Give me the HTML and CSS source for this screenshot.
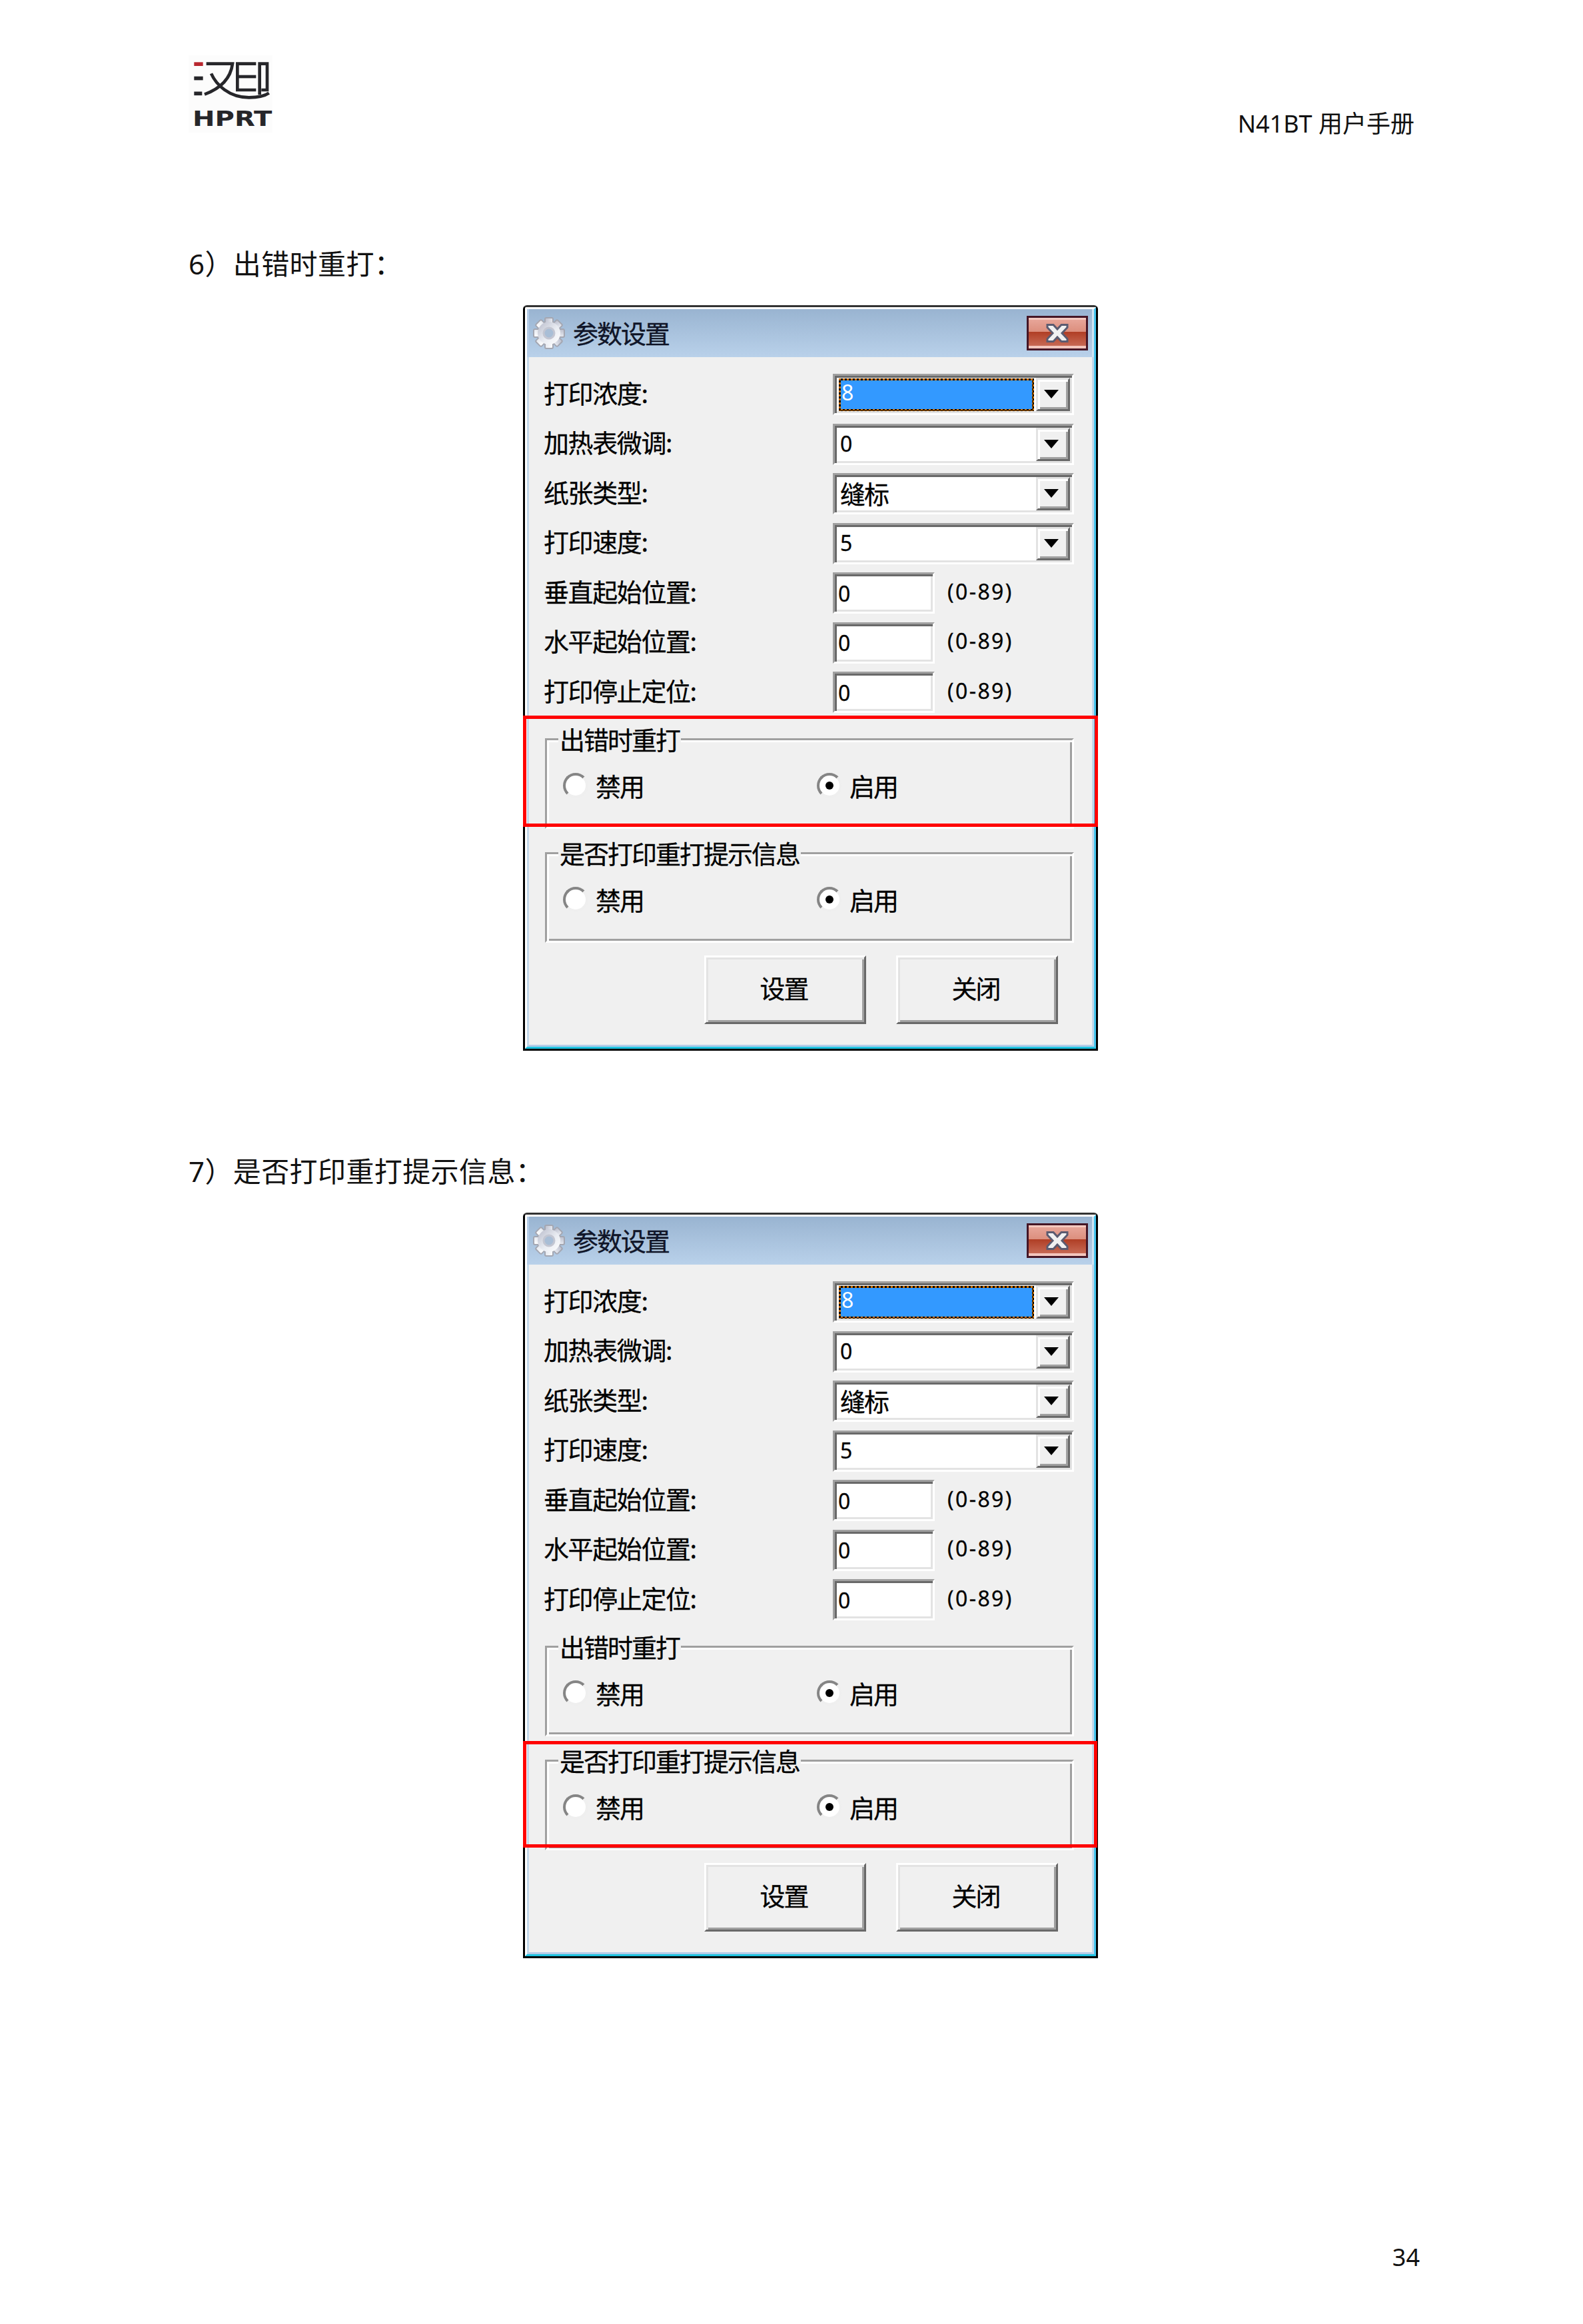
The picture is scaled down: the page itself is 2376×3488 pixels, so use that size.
FILE: index.html
```html
<!DOCTYPE html>
<html lang="zh-CN">
<head>
    <meta charset="UTF-8">
    <title>N41BT 用户手册</title>
    <link rel="stylesheet" href="styles.css">
</head>
<body>
    <svg class="sprite" width="0" height="0">
        <defs>
            <linearGradient id="gearFill" x1="0" y1="0" x2="1" y2="1">
                <stop offset="0" stop-color="#b9bccb"/>
                <stop offset="0.55" stop-color="#e9ecf2"/>
                <stop offset="1" stop-color="#ffffff"/>
            </linearGradient>
        </defs>
        <symbol id="gear" viewBox="0 0 48 48">
            <g fill="url(#gearFill)" stroke="#a4a7b2" stroke-width="2">
                <rect x="18" y="1" width="12" height="46" rx="2"/>
                <rect x="18" y="1" width="12" height="46" rx="2" transform="rotate(45 24 24)"/>
                <rect x="18" y="1" width="12" height="46" rx="2" transform="rotate(90 24 24)"/>
                <rect x="18" y="1" width="12" height="46" rx="2" transform="rotate(135 24 24)"/>
            </g>
            <circle cx="24" cy="24" r="17" fill="url(#gearFill)"/>
            <circle cx="24" cy="24" r="8" fill="#a9bed6" stroke="#c3c6d2" stroke-width="3"/>
        </symbol>
        <symbol id="closeX" viewBox="0 0 34 28">
            <path d="M2 1.5h9l6 6.500 6-6.500h9v4l-8 8.500 8 8.500v4h-9l-6-6.500-6 6.500h-9v-4l8-8.500-8-8.500z" fill="#f1f1f1" stroke="#5b5b70" stroke-width="3"/>
        </symbol>
    </svg>

    <div class="page">
        <header class="page-head">
            <svg class="logo" viewBox="70 40 378 348">
                <rect x="70" y="40" width="378" height="348" fill="#fcfcfc"/>
                <rect x="95" y="71" width="40" height="17" fill="#b8262e"/>
                <rect x="95" y="135" width="40" height="17" fill="#26262a"/>
                <path d="M95 212h36" fill="none" stroke="#26262a" stroke-width="17"/>
                <g fill="none" stroke="#26262a" stroke-width="14">
                    <path d="M150 78h118c-8 62-50 110-126 138"/>
                    <path d="M172 122c22 50 80 108 170 108 38 0 70-6 90-20"/>
                    <path d="M374 78h-84v118h84"/>
                    <path d="M290 136h84"/>
                    <path d="M390 218V78h34v118h-26"/>
                </g>
                <text class="logo-word" x="88" y="358" textLength="358" lengthAdjust="spacingAndGlyphs">HPRT</text>
            </svg>
            <div class="doc-title">N41BT 用户手册</div>
        </header>

        <h2 class="step first">6）出错时重打：</h2>

        <div class="dialog">
            <div class="edge">
                <div class="titlebar">
                    <svg class="gear"><use href="#gear"/></svg>
                    <span class="caption">参数设置</span>
                    <div class="close"><svg class="close-x"><use href="#closeX"/></svg></div>
                </div>
                <div class="client">
                    <div class="rows">
                        <div class="row">
                            <span class="label">打印浓度:</span>
                            <div class="field combo">
                                <div class="value"><span class="selected"><span class="selected-fill">8</span></span></div>
                                <div class="drop"></div>
                            </div>
                        </div>
                        <div class="row">
                            <span class="label">加热表微调:</span>
                            <div class="field combo">
                                <div class="value"><span class="digit">0</span></div>
                                <div class="drop"></div>
                            </div>
                        </div>
                        <div class="row">
                            <span class="label">纸张类型:</span>
                            <div class="field combo">
                                <div class="value">缝标</div>
                                <div class="drop"></div>
                            </div>
                        </div>
                        <div class="row">
                            <span class="label">打印速度:</span>
                            <div class="field combo">
                                <div class="value"><span class="digit">5</span></div>
                                <div class="drop"></div>
                            </div>
                        </div>
                        <div class="row">
                            <span class="label">垂直起始位置:</span>
                            <div class="field input"><span class="digit">0</span></div>
                            <span class="range">(0-89)</span>
                        </div>
                        <div class="row">
                            <span class="label">水平起始位置:</span>
                            <div class="field input"><span class="digit">0</span></div>
                            <span class="range">(0-89)</span>
                        </div>
                        <div class="row">
                            <span class="label">打印停止定位:</span>
                            <div class="field input"><span class="digit">0</span></div>
                            <span class="range">(0-89)</span>
                        </div>
                    </div>

                    <div class="group">
                        <span class="legend">出错时重打</span>
                        <div class="radios">
                            <div class="radio-item"><span class="radio"></span>禁用</div>
                            <div class="radio-item"><span class="radio on"></span>启用</div>
                        </div>
                    </div>

                    <div class="group">
                        <span class="legend">是否打印重打提示信息</span>
                        <div class="radios">
                            <div class="radio-item"><span class="radio"></span>禁用</div>
                            <div class="radio-item"><span class="radio on"></span>启用</div>
                        </div>
                    </div>

                    <div class="buttons">
                        <div class="btn">设置</div>
                        <div class="btn">关闭</div>
                    </div>
                </div>
            </div>
            <div class="mark mark-retry"></div>
        </div>

        <h2 class="step">7）是否打印重打提示信息：</h2>

        <div class="dialog">
            <div class="edge">
                <div class="titlebar">
                    <svg class="gear"><use href="#gear"/></svg>
                    <span class="caption">参数设置</span>
                    <div class="close"><svg class="close-x"><use href="#closeX"/></svg></div>
                </div>
                <div class="client">
                    <div class="rows">
                        <div class="row">
                            <span class="label">打印浓度:</span>
                            <div class="field combo">
                                <div class="value"><span class="selected"><span class="selected-fill">8</span></span></div>
                                <div class="drop"></div>
                            </div>
                        </div>
                        <div class="row">
                            <span class="label">加热表微调:</span>
                            <div class="field combo">
                                <div class="value"><span class="digit">0</span></div>
                                <div class="drop"></div>
                            </div>
                        </div>
                        <div class="row">
                            <span class="label">纸张类型:</span>
                            <div class="field combo">
                                <div class="value">缝标</div>
                                <div class="drop"></div>
                            </div>
                        </div>
                        <div class="row">
                            <span class="label">打印速度:</span>
                            <div class="field combo">
                                <div class="value"><span class="digit">5</span></div>
                                <div class="drop"></div>
                            </div>
                        </div>
                        <div class="row">
                            <span class="label">垂直起始位置:</span>
                            <div class="field input"><span class="digit">0</span></div>
                            <span class="range">(0-89)</span>
                        </div>
                        <div class="row">
                            <span class="label">水平起始位置:</span>
                            <div class="field input"><span class="digit">0</span></div>
                            <span class="range">(0-89)</span>
                        </div>
                        <div class="row">
                            <span class="label">打印停止定位:</span>
                            <div class="field input"><span class="digit">0</span></div>
                            <span class="range">(0-89)</span>
                        </div>
                    </div>

                    <div class="group">
                        <span class="legend">出错时重打</span>
                        <div class="radios">
                            <div class="radio-item"><span class="radio"></span>禁用</div>
                            <div class="radio-item"><span class="radio on"></span>启用</div>
                        </div>
                    </div>

                    <div class="group">
                        <span class="legend">是否打印重打提示信息</span>
                        <div class="radios">
                            <div class="radio-item"><span class="radio"></span>禁用</div>
                            <div class="radio-item"><span class="radio on"></span>启用</div>
                        </div>
                    </div>

                    <div class="buttons">
                        <div class="btn">设置</div>
                        <div class="btn">关闭</div>
                    </div>
                </div>
            </div>
            <div class="mark mark-info"></div>
        </div>

        <footer class="page-foot">34</footer>
    </div>
</body>
</html>
```

FILE: styles.css
```css
html, body {
    margin: 0;
    padding: 0;
    background: #fff;
    color: #111;
    font-family: "Noto Sans", "Noto Sans CJK SC", sans-serif;
}

.sprite {
    position: absolute;
}

.page {
    width: 2376px;
    height: 3488px;
    box-sizing: border-box;
    padding: 83px 0 0 283px;
    overflow: hidden;
}

/* Page header */
.page-head {
    display: flex;
    justify-content: space-between;
    align-items: flex-start;
    padding-right: 253px;
}

.logo {
    display: block;
    width: 126px;
    height: 116px;
}

.logo-word {
    font-family: "DejaVu Sans", sans-serif;
    font-weight: bold;
    font-size: 98px;
    fill: #26262a;
}

.doc-title {
    margin-top: 79px;
    font-size: 36px;
    line-height: 48px;
}

.step {
    margin: 157px 0 0;
    font-size: 42px;
    font-weight: normal;
    letter-spacing: 0.4px;
    line-height: 48px;
}

.step.first {
    margin-top: 162px;
}

.page-foot {
    margin-top: 425px;
    padding-right: 245px;
    text-align: right;
    font-size: 36px;
    line-height: 48px;
}

/* Dialog window */
.dialog {
    position: relative;
    width: 863px;
    height: 1119px;
    box-sizing: border-box;
    margin: 38px 0 0 502px;
    border: 3px solid #000;
    border-top-color: #333;
    border-radius: 6px 6px 0 0;
    font-family: "Noto Sans CJK SC", sans-serif;
    font-size: 36px;
    color: #000;
    -webkit-text-stroke: 0.3px #000;
}

.edge {
    display: flex;
    flex-direction: column;
    height: 100%;
    box-sizing: border-box;
    border-style: solid;
    border-width: 3px;
    border-color: #fff #46c5ee #1fc3e0 #fff;
    border-top-left-radius: 3px;
}

.titlebar {
    display: flex;
    align-items: center;
    flex: none;
    height: 72px;
    padding: 0 6px 0 9px;
    background: linear-gradient(#99b4d1, #b9d1ea);
    border-left: 3px solid #b5cde8;
    border-right: 3px solid #d0e4f2;
}

.gear {
    width: 48px;
    height: 48px;
    margin-left: -3px;
}

.caption {
    margin: -3px 0 0 12px;
    width: 144px;
    font-size: 38px;
    letter-spacing: -2px;
    line-height: 40px;
    color: #10162c;
}

.close {
    display: flex;
    align-items: center;
    justify-content: center;
    width: 92px;
    height: 52px;
    box-sizing: border-box;
    margin-left: auto;
    border: 3px solid #451626;
    background: linear-gradient(#f5c9c0 0 3px, #e7a598 3px, #dc8f7e 45%, #b03e25 46%, #c76a55 92%, #f3c6bd 92%);
}

.close-x {
    width: 34px;
    height: 28px;
}

.client {
    flex: 1;
    display: flex;
    flex-direction: column;
    padding: 25px 27px 0 24px;
    background: #f0f0f0;
    border-style: solid;
    border-width: 0 3px 3px;
    border-color: #b5cde8 #c4d8ea #b5cde8;
}

/* Form rows */
.rows {
    display: flex;
    flex-direction: column;
    gap: 12.5px;
}

.row {
    display: flex;
    align-items: center;
    height: 62px;
}

.label {
    width: 434px;
    flex: none;
    margin: -7px 0 0 -2px;
    font-size: 38px;
    letter-spacing: -1.4px;
    line-height: 40px;
}

.field {
    box-sizing: border-box;
    height: 62px;
    padding: 3px;
    background: #fff;
    border-style: solid;
    border-width: 3px;
    border-color: #a0a0a0 #fff #fff #a0a0a0;
    box-shadow: inset 3px 3px 0 #696969, inset -3px -3px 0 #e3e3e3;
}

.combo {
    display: flex;
    width: 363px;
}

.input {
    display: flex;
    align-items: center;
    width: 153px;
    padding-left: 5px;
    margin-right: 19px;
}

.value {
    flex: 1;
    display: flex;
    align-items: center;
    padding: 0 0 3px 5px;
    font-size: 38px;
    letter-spacing: -2px;
}

.digit {
    font-family: "Noto Sans", sans-serif;
    font-size: 32px;
    letter-spacing: 0;
}

.selected {
    flex: 1;
    display: flex;
    margin: 0 3px -3px -2px;
    height: 43px;
    padding: 3px;
    background: repeating-conic-gradient(#000 0 25%, #c86c00 0 50%) 0 0 / 6px 6px;
}

.selected-fill {
    flex: 1;
    padding-left: 1px;
    background: #3399ff;
    color: #fff;
    -webkit-text-stroke: 0;
    font-family: "Noto Sans", sans-serif;
    font-size: 32px;
    letter-spacing: 0;
    line-height: 35px;
}

.drop {
    position: relative;
    flex: none;
    width: 51px;
    box-sizing: border-box;
    background: #f0f0f0;
    border-style: solid;
    border-width: 3px;
    border-color: #e3e3e3 #696969 #696969 #e3e3e3;
    box-shadow: inset 3px 3px 0 #fff, inset -3px -3px 0 #a0a0a0;
}

/* arrow of the combo box */
.drop::after {
    content: "";
    position: absolute;
    left: 9px;
    top: 15px;
    border-style: solid;
    border-width: 13px 11px 0;
    border-color: #000 transparent transparent;
}

.range {
    font-family: "Noto Sans", sans-serif;
    font-size: 32px;
    letter-spacing: 2.4px;
    margin-top: -6px;
}

/* Group boxes */
.group {
    display: flex;
    flex-direction: column;
    height: 136px;
    box-sizing: border-box;
    margin-top: 35px;
    border-style: solid;
    border-width: 3px;
    border-color: #a0a0a0 #fff #fff #a0a0a0;
    box-shadow: inset 3px 3px 0 #fff, inset -3px -3px 0 #a0a0a0;
}

.rows + .group {
    margin-top: 38px;
}

.legend {
    align-self: flex-start;
    margin: -20px 0 0 17px;
    padding: 0 2px;
    background: #f0f0f0;
    font-size: 38px;
    letter-spacing: -2px;
    line-height: 36px;
}

.radios {
    display: grid;
    grid-template-columns: 381px 1fr;
    margin: 33px 0 0 24px;
}

.radio-item {
    display: flex;
    align-items: center;
    gap: 11px;
    height: 38px;
    font-size: 38px;
    letter-spacing: -2px;
    line-height: 34px;
}

.radio {
    position: relative;
    width: 38px;
    height: 38px;
    box-sizing: border-box;
    border-radius: 50%;
    background: #fff;
    border: 4px solid;
    border-color: #858585 #efefef #efefef #858585;
}

.radio.on::after {
    content: "";
    position: absolute;
    left: 9px;
    top: 9px;
    width: 12px;
    height: 12px;
    border-radius: 50%;
    background: #000;
}

/* Buttons */
.buttons {
    display: flex;
    justify-content: flex-end;
    gap: 45px;
    margin-top: 19px;
    padding-right: 24px;
}

.btn {
    display: flex;
    align-items: center;
    justify-content: center;
    width: 243px;
    height: 103px;
    box-sizing: border-box;
    background: #f0f0f0;
    border-style: solid;
    border-width: 3px;
    border-color: #fff #696969 #696969 #fff;
    box-shadow: inset 3px 3px 0 #e3e3e3, inset -3px -3px 0 #a0a0a0;
    font-size: 38px;
    letter-spacing: -2px;
    padding: 0 4px 9px 0;
}

/* Red highlight drawn over a dialog */
.mark {
    position: absolute;
    left: -3px;
    right: -3px;
    box-sizing: border-box;
    border: 5px solid #f00;
}

.mark-retry {
    top: 613px;
    height: 167px;
}

.mark-info {
    top: 790px;
    right: -2px;
    height: 160px;
}
```
